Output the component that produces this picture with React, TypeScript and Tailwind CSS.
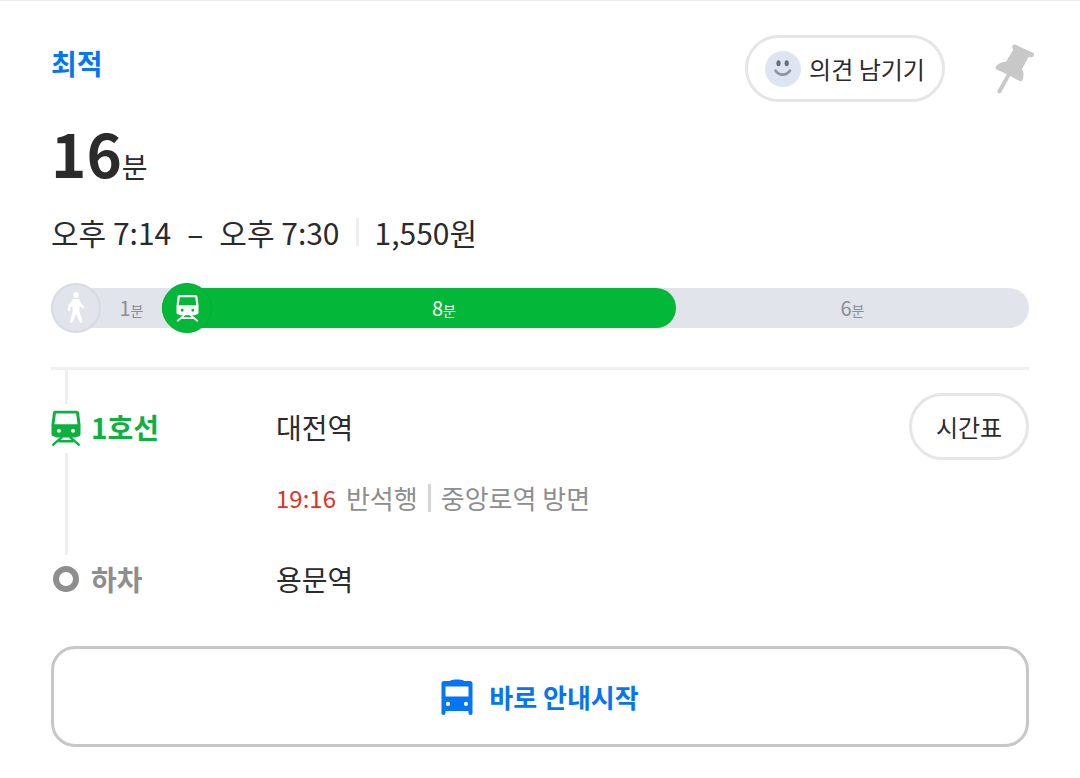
import type { ReactNode } from "react";

type Segment = {
  minutes: number;
  className: string;
  icon?: ReactNode;
};

function PinIcon() {
  return (
    <svg width="40" height="50" viewBox="0 0 40 50" fill="#c8c8c8" aria-hidden="true">
      <path d="M17.500 1.400c.7-1 1.700-1.200 2.800-.8l17.700 8.200c1.300.8 1.500 2 .8 3-.7 1.200-2 1.600-3.200 1.400l-2.100-.3-6.500 12c1.900 3.300 2 7.300.4 11-.6 1.300-1.700 1.700-2.900 1.100l-9.300-5-9 16.500c-.6 1.100-1.700 1.300-2.700.8-1.100-.6-1.400-1.700-.8-2.800l9.100-16.300L1.600 25.400C.4 24.700.1 23.600.9 22.500c2.500-3 6-4.700 10.100-4.800L18 6.200 17.500 4c-.5-.9-.5-1.700 0-2.600z" />
    </svg>
  );
}

function SmileIcon() {
  return (
    <svg width="36" height="36" viewBox="0 0 36 36" fill="none" aria-hidden="true">
      <circle cx="18" cy="18" r="18" fill="#dfe5f0" />
      <ellipse cx="13.500" cy="12.300" rx="2.100" ry="3" fill="#666e7c" />
      <ellipse cx="21.700" cy="12.300" rx="2.100" ry="3" fill="#666e7c" />
      <path d="M10.500 19.500c3.500 5.500 11 5.500 14.500 0" stroke="#8b95a6" strokeWidth="2.600" strokeLinecap="round" />
    </svg>
  );
}

function WalkIcon() {
  return (
    <svg width="18" height="32" viewBox="0 0 18 32" fill="#fff" aria-hidden="true">
      <circle cx="9" cy="3" r="2.900" />
      <path d="M6 7h6l2 4.500 3 3c.7 1-.6 2.300-1.600 1.600L12.500 14v5.500l3 9.500c.3 1.600-2 2.500-2.800.9L9 22l-3.200 8c-.9 1.500-3.200.6-2.800-1l2.500-9.500V14l-2 1.200-.5 3.300c-.4 1.300-2.200 1-2.200-.4l.5-4.600z" />
    </svg>
  );
}

function TrainIcon({ className }: { className: string }) {
  return (
    <svg viewBox="0 0 32 38" fill="currentColor" className={className} aria-hidden="true">
      <path
        fillRule="evenodd"
        d="M5 0h22c1.600 0 2.700.9 3 2.500L31.500 15v9.500c0 1.500-.6 2.300-1.800 2.700L26 28.500H6l-3.700-1.300C1.100 26.800.5 26 .5 24.500V15L2 2.500C2.300.9 3.400 0 5 0zM5.200 3 3.700 14.500h24.600L26.800 3zM8.500 19.400a2.100 2.100 0 1 0 0 4.200 2.100 2.100 0 0 0 0-4.200zm15 0a2.100 2.100 0 1 0 0 4.200 2.100 2.100 0 0 0 0-4.200z"
      />
      <path d="M12 28 1.500 37M20 28l10.500 9M8 32.500h16" fill="none" stroke="currentColor" strokeWidth="2.600" />
    </svg>
  );
}

function BusIcon() {
  return (
    <svg width="32" height="36" viewBox="0 0 32 36" fill="currentColor" aria-hidden="true">
      <path
        fillRule="evenodd"
        d="M9.500 1.500C12 .3 20 .3 22.500 1.500l.8.500H29c1.700 0 2.500 1 2.500 2.500V34c0 1.300-.7 2-2 2s-2-.7-2-2v-2h-23v2c0 1.300-.7 2-2 2s-2-.7-2-2V4.500C.5 3 1.300 2 3 2h5.700zM4.500 7.500v10h23v-10zM7 22.800a2.100 2.100 0 1 0 0 4.200 2.100 2.100 0 0 0 0-4.200zm18 0a2.100 2.100 0 1 0 0 4.200 2.100 2.100 0 0 0 0-4.200z"
      />
    </svg>
  );
}

const segments: Segment[] = [
  {
    minutes: 1,
    className: "flex-[111] text-[#8b8e94]",
    icon: (
      <span className="flex size-[50px] shrink-0 items-center justify-center rounded-full border-2 border-[#d7dbe2] bg-[#e1e4ea]">
        <WalkIcon />
      </span>
    ),
  },
  {
    minutes: 8,
    className: "flex-[514] rounded-full bg-[#03b738] text-white",
    icon: (
      <span className="flex size-[50px] shrink-0 items-center justify-center rounded-full border border-[#04ae36] bg-[#03b738]">
        <TrainIcon className="h-[27px] w-[23px]" />
      </span>
    ),
  },
  { minutes: 6, className: "flex-[353] text-[#8b8e94]" },
];

function RouteBar() {
  return (
    <div className="mt-9 flex h-10 rounded-full bg-[#e1e4ea]">
      {segments.map((segment) => (
        <div key={segment.minutes} className={`flex min-w-0 items-center ${segment.className}`}>
          {segment.icon}
          <span className="flex-1 text-center text-xl leading-none">
            {segment.minutes}
            <span className="text-sm leading-none">분</span>
          </span>
        </div>
      ))}
    </div>
  );
}

export default function App() {
  return (
    <main className="border-t border-[#ececec] bg-white px-[51px] pb-8 font-['Noto_Sans_CJK_KR',sans-serif] text-[#2b2b2b]">
      <header className="flex items-start justify-between pt-[34px]">
        <h1 className="pt-2 text-[28px] leading-10 font-bold text-[#0475f4]">최적</h1>
        <div className="-mr-1.5 flex items-center gap-[50px]">
          <button
            type="button"
            className="flex h-[67px] w-[200px] items-center justify-center gap-2 rounded-full border-3 border-[#e6e6e6] text-2xl"
          >
            <SmileIcon />
            의견 남기기
          </button>
          <button type="button" aria-label="고정">
            <PinIcon />
          </button>
        </div>
      </header>

      <p className="mt-2.5 text-6xl leading-20 font-bold">
        16<span className="text-[28px] font-normal">분</span>
      </p>

      <div className="mt-1.5 flex items-center gap-4 text-3xl leading-10">
        <span>오후 7:14</span>
        <span>–</span>
        <span>오후 7:30</span>
        <span className="h-7 w-[3px] bg-[#efefef]" />
        <span>1,550원</span>
      </div>

      <RouteBar />

      <ol className="mt-[39px] border-t-3 border-[#efefef]">
        <li className="flex h-[185px]">
          <div className="flex w-[30px] flex-col items-center gap-1.5 text-[#0eb140]">
            <span className="h-[34px] w-[3px] bg-[#efefef]" />
            <TrainIcon className="h-[37px] w-[30px]" />
            <span className="w-[3px] flex-1 bg-[#efefef]" />
          </div>
          <strong className="mt-[23px] ml-2.5 flex h-[67px] w-[185px] items-center text-[28px] text-[#0eb140]">
            1호선
          </strong>
          <div className="flex-1 pt-[23px]">
            <div className="flex h-[67px] items-center justify-between text-[28px]">
              대전역
              <button
                type="button"
                className="h-[67px] w-[120px] rounded-full border-3 border-[#e6e6e6] text-2xl"
              >
                시간표
              </button>
            </div>
            <p className="mt-[18px] flex items-center gap-2.5 text-[26px] leading-10 text-[#8e8e8e]">
              <span className="text-2xl text-[#e0321f]">19:16</span>
              <span>반석행</span>
              <span className="h-7 w-[3px] bg-[#d6d6d6]" />
              <span>중앙로역 방면</span>
            </p>
          </div>
        </li>
        <li className="flex h-12 items-center">
          <span className="flex w-[30px] justify-center">
            <span className="size-[26px] rounded-full border-6 border-[#8e8e8e]" />
          </span>
          <strong className="ml-2.5 w-[185px] text-[28px] text-[#8e8e8e]">하차</strong>
          <span className="text-[28px]">용문역</span>
        </li>
      </ol>

      <button
        type="button"
        className="mt-[43px] flex h-[101px] w-full items-center justify-center gap-4 rounded-3xl border-3 border-[#c7c7c7] text-[26px] font-bold text-[#0475f4]"
      >
        <BusIcon />
        바로 안내시작
      </button>
    </main>
  );
}
